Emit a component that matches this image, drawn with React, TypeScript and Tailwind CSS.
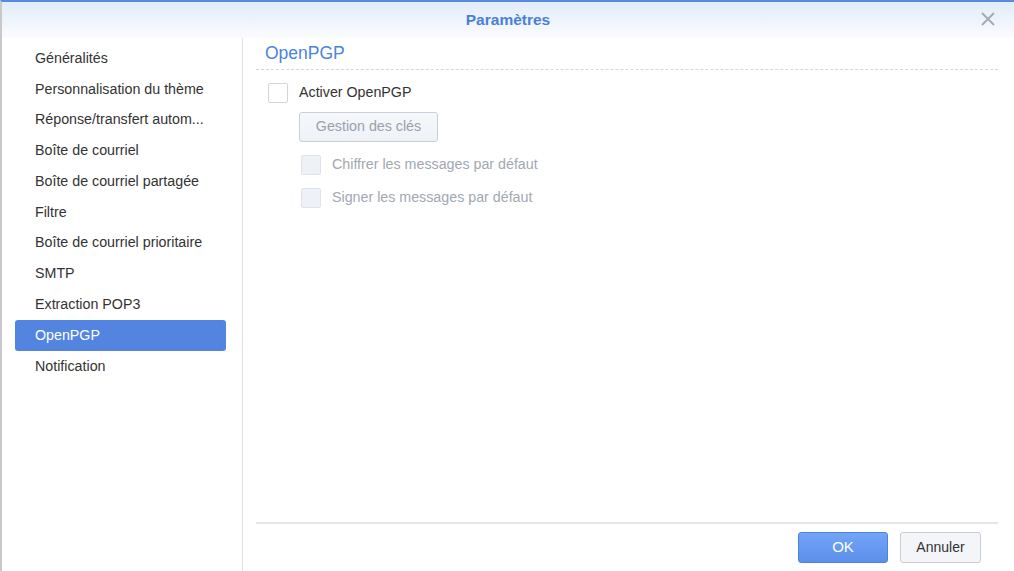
const items = [
  "Généralités",
  "Personnalisation du thème",
  "Réponse/transfert autom...",
  "Boîte de courriel",
  "Boîte de courriel partagée",
  "Filtre",
  "Boîte de courriel prioritaire",
  "SMTP",
  "Extraction POP3",
  "OpenPGP",
  "Notification",
];

export default function App() {
  const selected = "OpenPGP";

  return (
    <div
      className="w-[1014px] h-[571px] flex flex-col bg-white border-t-2 border-[#5a8ae0] border-l-2 border-l-[#c9c9c9] overflow-hidden text-[14.25px] text-[#333]"
      style={{ fontFamily: '"Liberation Sans", Arial, sans-serif' }}
    >
      {/* Header */}
      <div className="relative h-[36px] flex items-center justify-center bg-gradient-to-b from-[#e1ecf9] to-[#fbfcfe]">
        <span className="font-bold text-[15.5px] text-[#4a7fd8]">Paramètres</span>
        <button className="absolute right-[18px] top-[9px] text-[#a5a9ae]">
          <svg width="16" height="16" viewBox="0 0 16 16">
            <path d="M2 2 L14 14 M14 2 L2 14" stroke="currentColor" strokeWidth="1.8" />
          </svg>
        </button>
      </div>

      <div className="flex flex-1 min-h-0">
        {/* Sidebar */}
        <div className="w-[241px] border-r border-[#e2e2e2] pt-[5px] pl-[13px] pr-[16px] flex flex-col">
          {items.map((item) => (
            <div
              key={item}
              className={
                item === selected
                  ? "h-[30.8px] flex items-center pl-[20px] rounded-[3px] bg-[#5385e0] text-white"
                  : "h-[30.8px] flex items-center pl-[20px]"
              }
            >
              {item}
            </div>
          ))}
        </div>

        {/* Content */}
        <div className="flex-1 flex flex-col pl-[13px] pr-[16px]">
          <div className="flex-1">
            <div className="border-b border-dashed border-[#d4d8de] pl-[9px] pt-[3px] pb-[4px] text-[17.5px] leading-[24px] text-[#4a84e0]">
              OpenPGP
            </div>
            <div className="pl-[12px] pt-[13px] flex flex-col">
              <label className="flex items-center gap-[11px] h-[20px]">
                <span className="w-[20px] h-[20px] border border-[#d0d5dc] rounded-[2px] bg-white" />
                <span>Activer OpenPGP</span>
              </label>
              <div className="pl-[31px] pt-[9px]">
                <button className="h-[30px] w-[139px] border border-[#c9d0da] rounded-[3px] bg-gradient-to-b from-[#f6f8fb] to-[#eef2f7] text-[#9aa1ab]">
                  Gestion des clés
                </button>
              </div>
              <div className="pl-[33px] pt-[13px] flex flex-col gap-[13px]">
                <label className="flex items-center gap-[11px] h-[20px]">
                  <span className="w-[20px] h-[20px] border border-[#e0e4ea] rounded-[2px] bg-[#eef1f6]" />
                  <span className="text-[#a2a8b1]">Chiffrer les messages par défaut</span>
                </label>
                <label className="flex items-center gap-[11px] h-[20px]">
                  <span className="w-[20px] h-[20px] border border-[#e0e4ea] rounded-[2px] bg-[#eef1f6]" />
                  <span className="text-[#a2a8b1]">Signer les messages par défaut</span>
                </label>
              </div>
            </div>
          </div>

          {/* Footer */}
          <div className="border-t-2 border-[#e6e6e6] h-[49px] flex items-start justify-end gap-[12px] pt-[8px] pr-[17px]">
            <button className="w-[90px] h-[31px] rounded-[3px] border border-[#4f82dc] bg-gradient-to-b from-[#72a4f7] to-[#5b8fe9] text-white text-[15px]">
              OK
            </button>
            <button className="w-[81px] h-[31px] rounded-[3px] border border-[#c8cdd6] bg-[#f3f5f9] text-[#333] text-[14px]">
              Annuler
            </button>
          </div>
        </div>
      </div>
    </div>
  );
}
